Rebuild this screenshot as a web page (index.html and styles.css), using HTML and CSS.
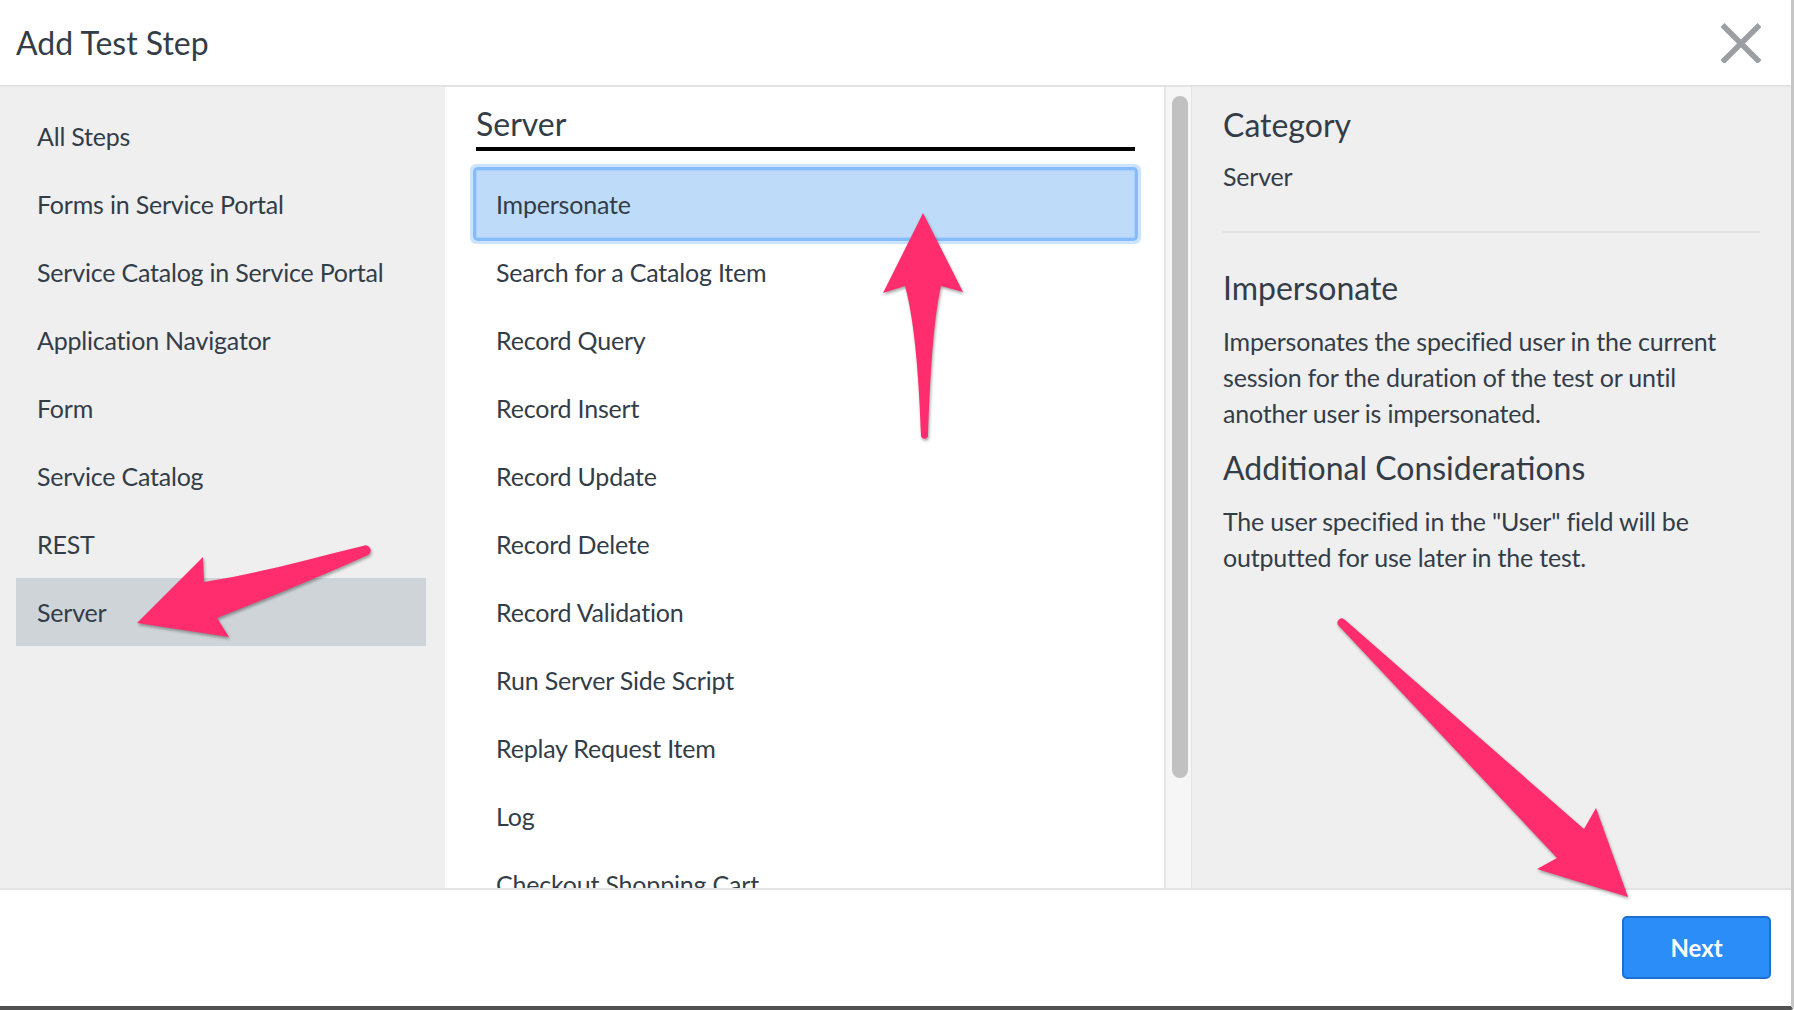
FILE: index.html
```html
<!DOCTYPE html>
<html lang="en">
<head>
<meta charset="utf-8">
<title>Add Test Step</title>
<link rel="stylesheet" href="styles.css">
</head>
<body>
<div class="dialog">
  <header class="dlg-header">
    <h1 class="dlg-title">Add Test Step</h1>
    <button class="close-btn" aria-label="Close">
      <svg width="40" height="40" viewBox="0 0 40 40"><path d="M1.5 2 L38.5 39 M38.5 2 L1.5 39" stroke="#9b9ea3" stroke-width="5.5" fill="none"/></svg>
    </button>
  </header>

  <main class="dlg-body">
    <nav class="categories">
      <div class="cat-item">All Steps</div>
      <div class="cat-item">Forms in Service Portal</div>
      <div class="cat-item">Service Catalog in Service Portal</div>
      <div class="cat-item">Application Navigator</div>
      <div class="cat-item">Form</div>
      <div class="cat-item">Service Catalog</div>
      <div class="cat-item">REST</div>
      <div class="cat-item selected">Server</div>
    </nav>

    <section class="steps">
      <h2 class="steps-title">Server</h2>
      <ul class="step-list">
        <li class="step-item selected">Impersonate</li>
        <li class="step-item">Search for a Catalog Item</li>
        <li class="step-item">Record Query</li>
        <li class="step-item">Record Insert</li>
        <li class="step-item">Record Update</li>
        <li class="step-item">Record Delete</li>
        <li class="step-item">Record Validation</li>
        <li class="step-item">Run Server Side Script</li>
        <li class="step-item">Replay Request Item</li>
        <li class="step-item">Log</li>
        <li class="step-item">Checkout Shopping Cart</li>
      </ul>
    </section>

    <div class="scrollbar"><div class="scroll-thumb"></div></div>

    <aside class="details">
      <h3 class="details-heading">Category</h3>
      <p class="details-value">Server</p>
      <hr class="details-divider">
      <h3 class="details-heading step-name">Impersonate</h3>
      <p class="details-text">Impersonates the specified user in the current session for the duration of the test or until another user is impersonated.</p>
      <h3 class="details-heading extra">Additional Considerations</h3>
      <p class="details-text">The user specified in the "User" field will be outputted for use later in the test.</p>
    </aside>
  </main>

  <footer class="dlg-footer">
    <button class="next-btn">Next</button>
  </footer>

  <svg class="annotations" width="1794" height="1010" viewBox="0 0 1794 1010">
    <g class="arrow">
      <path d="M363 546 C320 556 262 573 204 582 L203 557 L137 623 L229 637 L217 618 C262 600 322 576 368 555 A4.6 4.6 0 0 0 363 546 Z"/>
      <path d="M923 213 L963 292 L941 286 C933 322 930 380 928 436 A3.6 3.6 0 0 1 921 436 C919 380 915 322 905 286 L883 293 Z"/>
      <path d="M1628 897 L1537 869 L1557 858 L1338 625 A4.4 4.4 0 0 1 1344 619 L1584 829 L1596 808 Z"/>
    </g>
  </svg>
</div>
</body>
</html>
```

FILE: styles.css
```css
* {
  box-sizing: border-box;
}

html, body {
  margin: 0;
  padding: 0;
}

body {
  font-family: Lato, "Open Sans", "Liberation Sans", sans-serif;
  color: #333d48;
  background: #ffffff;
}

.dialog {
  position: relative;
  width: 1794px;
  height: 1010px;
  display: flex;
  flex-direction: column;
  background: #ffffff;
  border-right: 3px solid #c6c6c6;
  border-bottom: 4px solid #515151;
  border-bottom-right-radius: 4px;
  overflow: hidden;
}

/* Header */
.dlg-header {
  flex: 0 0 87px;
  display: flex;
  align-items: center;
  justify-content: space-between;
  padding: 0 30px 0 16px;
  border-bottom: 2px solid #e3e3e3;
}

.dlg-title {
  margin: 0;
  font-size: 32px;
  line-height: 40px;
  font-weight: 400;
}

.close-btn {
  width: 40px;
  height: 41px;
  padding: 0;
  border: 0;
  background: none;
  display: block;
}

.close-btn svg {
  display: block;
}

/* Body */
.dlg-body {
  flex: 1 1 auto;
  min-height: 0;
  display: grid;
  grid-template-columns: 445px 719px 28px 1fr;
}

.categories {
  background: #efefef;
  padding: 15px 19px 0 16px;
}

.cat-item {
  height: 68px;
  line-height: 68px;
  padding-left: 21px;
  font-size: 25px;
  letter-spacing: -0.2px;
  white-space: nowrap;
}

.cat-item.selected {
  background: #cfd4d8;
}

.steps {
  padding: 0 29px 0 31px;
  overflow: hidden;
  background: #ffffff;
}

.steps-title {
  margin: 17px 0 0;
  font-size: 32px;
  line-height: 40px;
  font-weight: 400;
  padding-bottom: 3px;
  border-bottom: 4px solid #000000;
}

.step-list {
  list-style: none;
  margin: 19px 0 0;
  padding: 0;
}

.step-item {
  height: 68px;
  line-height: 68px;
  padding-left: 20px;
  font-size: 25px;
  letter-spacing: -0.2px;
  white-space: nowrap;
}

.step-item.selected {
  background: #bedcf9;
  border-radius: 2px;
  box-shadow: inset 0 0 0 1px #a8cff9, 0 0 0 3px #86bcf9, 0 0 0 6px #cbe3fc;
}

.scrollbar {
  background: #f6f6f6;
  border-left: 2px solid #e6e6e6;
  border-right: 1px solid #e4e4e4;
  padding: 9px 3px 0 6px;
}

.scroll-thumb {
  width: 16px;
  height: 682px;
  border-radius: 8px;
  background: #c1c1c1;
}

.details {
  background: #efefef;
  padding: 18px 31px 0 31px;
}

.details-heading {
  margin: 0;
  font-size: 32px;
  line-height: 40px;
  font-weight: 400;
}

.details-value {
  margin: 13px 0 0;
  font-size: 25px;
  letter-spacing: -0.2px;
  line-height: 36px;
}

.details-divider {
  margin: 37px 0 0;
  border: 0;
  border-top: 2px solid #e2e2e2;
  height: 0;
}

.details-heading.step-name {
  margin-top: 35px;
}

.details-heading.extra {
  margin-top: 17px;
}

.details-text {
  margin: 15px 0 0;
  font-size: 25px;
  letter-spacing: -0.2px;
  line-height: 36px;
}

/* Footer */
.dlg-footer {
  flex: 0 0 118px;
  border-top: 2px solid #e4e4e4;
  display: flex;
  justify-content: flex-end;
  align-items: flex-start;
  padding: 26px 20px 0 0;
}

.next-btn {
  width: 149px;
  height: 63px;
  background: #2a8df8;
  border: 2px solid #1d70d3;
  border-radius: 5px;
  color: #ffffff;
  font-family: Lato, "Open Sans", sans-serif;
  font-size: 24px;
  font-weight: 700;
}

/* Annotation arrows overlay */
.annotations {
  position: absolute;
  left: 0;
  top: 0;
  pointer-events: none;
}

.arrow path {
  fill: #ff2d6d;
  filter: drop-shadow(1px 2px 1.5px rgba(0, 0, 0, 0.35));
}
```
